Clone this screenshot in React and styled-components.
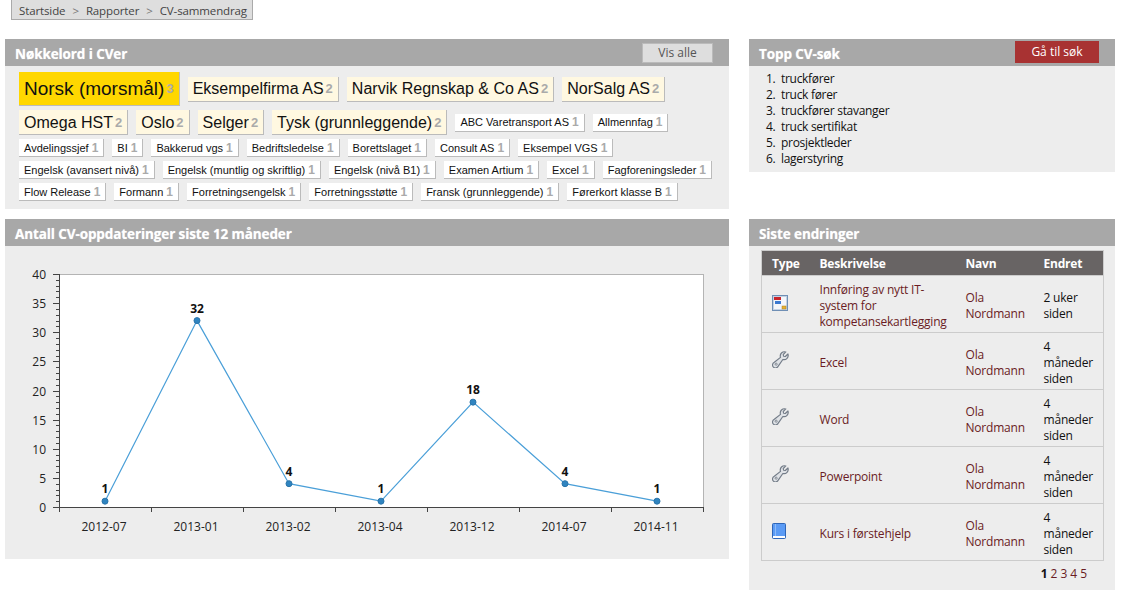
import styled, { createGlobalStyle } from "styled-components";

const GlobalStyle = createGlobalStyle`
  html, body {
    margin: 0;
    padding: 0;
    background: #fff;
    color: #111;
    font-family: "Open Sans", "Noto Sans", sans-serif;
    font-size: 12px;
  }
`;

const Page = styled.div`
  width: 1122px;
  height: 601px;
  overflow: hidden;
`;

const Breadcrumb = styled.div`
  display: flex;
  width: 242px;
  height: 20px;
  box-sizing: border-box;
  margin-left: 11px;
  padding: 2px 0 0 7px;
  gap: 7px;
  background: #dedede;
  border: 1px solid #aaa;
  border-top: 0;
  color: #444;
  font-size: 11.5px;
  line-height: 17px;
  letter-spacing: -0.12px;
  white-space: nowrap;
`;

const Crumb = styled.span`
  color: ${(p) => (p.$sep ? "#777" : "#444")};
`;

const Dashboard = styled.div`
  display: grid;
  grid-template-columns: 724px 366px;
  grid-template-rows: 170px auto;
  column-gap: 20px;
  row-gap: 10px;
  align-items: start;
  padding: 19px 0 0 5px;
`;

const Panel = styled.section`
  background: #ededed;
  height: ${(p) => p.$height}px;
`;

const PanelHeader = styled.header`
  display: flex;
  align-items: center;
  justify-content: space-between;
  height: 27px;
  box-sizing: border-box;
  padding: 0 16px 0 10px;
  background: #a8a8a8;
`;

const PanelTitle = styled.h2`
  margin: 2px 0 0;
  color: #fff;
  font-size: 13.5px;
  font-weight: 700;
  letter-spacing: -0.1px;
  text-shadow: 0 0 1px rgba(255, 255, 255, 0.6);
`;

const GreyButton = styled.button`
  width: 71px;
  height: 20px;
  padding: 0;
  background: #dedede;
  border: 1px solid #bbb;
  color: #555;
  font: 12px "Open Sans", sans-serif;
`;

const RedButton = styled.button`
  width: 84px;
  height: 22px;
  margin-top: -2px;
  padding: 0;
  background: #a83232;
  border: 0;
  color: #fff;
  font: 12px "Open Sans", sans-serif;
`;

const TagCloud = styled.div`
  display: flex;
  flex-wrap: wrap;
  align-items: center;
  gap: 4px 8px;
  padding: 6px 14px 0 14px;
`;

const sizes = {
  large: { font: 19, height: 34, bg: "#ffd700" },
  medium: { font: 16.05, height: 25, bg: "#fff8e1" },
  small: { font: 11, height: 18, bg: "#fff" },
};

const Tag = styled.a`
  display: flex;
  align-items: center;
  box-sizing: border-box;
  height: ${(p) => sizes[p.$size].height}px;
  padding: 0 5px;
  background: ${(p) => sizes[p.$size].bg};
  border-right: 1px solid #bbb;
  border-bottom: 1px solid #bbb;
  color: #111;
  font-family: "Liberation Sans", Arial, sans-serif;
  font-size: ${(p) => sizes[p.$size].font}px;
  white-space: nowrap;
`;

const TagCount = styled.span`
  margin-left: ${(p) => (p.$size === "small" ? 3 : 2)}px;
  color: #aaa;
  font-size: ${(p) => (p.$size === "small" ? 12 : 13)}px;
  font-weight: 700;
`;

const SearchList = styled.ol`
  margin: 0;
  padding: 5px 0 0 32px;
  line-height: 16px;
  letter-spacing: -0.3px;

  li::marker {
    content: counter(list-item) ".  ";
  }
`;

const ChartBox = styled.svg`
  display: block;
`;

const TableWrap = styled.div`
  padding: 4px 12px 0;
`;

const ChangeTable = styled.table`
  width: 342px;
  table-layout: fixed;
  border-collapse: collapse;
  border: 1px solid #ccc;
  line-height: 16px;
  letter-spacing: -0.2px;
`;

const HeadCell = styled.th`
  height: 23px;
  padding: 1px 0 0 10px;
  background: #686464;
  color: #fff;
  font-weight: 700;
  text-align: left;
`;

const Row = styled.tr`
  height: 57px;
  border-top: 1px solid #ccc;
`;

const Cell = styled.td`
  padding: 3px 4px 0 10px;
  vertical-align: middle;
  color: ${(p) => (p.$link ? "#6a1c24" : "#111")};
`;

const IconCell = styled(Cell)`
  padding: 0 4px 3px 10px;
  line-height: 0;
`;

const Pager = styled.div`
  display: flex;
  justify-content: flex-end;
  gap: 3px;
  padding: 5px 16px 0 0;
  line-height: 16px;
`;

const PageNo = styled.span`
  font-weight: ${(p) => (p.$active ? 700 : 400)};
  color: ${(p) => (p.$active ? "#111" : "#6a1c24")};
`;

const tags = [
  ["Norsk (morsmål)", 3, "large"],
  ["Eksempelfirma AS", 2, "medium"],
  ["Narvik Regnskap & Co AS", 2, "medium"],
  ["NorSalg AS", 2, "medium"],
  ["Omega HST", 2, "medium"],
  ["Oslo", 2, "medium"],
  ["Selger", 2, "medium"],
  ["Tysk (grunnleggende)", 2, "medium"],
  ["ABC Varetransport AS", 1, "small"],
  ["Allmennfag", 1, "small"],
  ["Avdelingssjef", 1, "small"],
  ["BI", 1, "small"],
  ["Bakkerud vgs", 1, "small"],
  ["Bedriftsledelse", 1, "small"],
  ["Borettslaget", 1, "small"],
  ["Consult AS", 1, "small"],
  ["Eksempel VGS", 1, "small"],
  ["Engelsk (avansert nivå)", 1, "small"],
  ["Engelsk (muntlig og skriftlig)", 1, "small"],
  ["Engelsk (nivå B1)", 1, "small"],
  ["Examen Artium", 1, "small"],
  ["Excel", 1, "small"],
  ["Fagforeningsleder", 1, "small"],
  ["Flow Release", 1, "small"],
  ["Formann", 1, "small"],
  ["Forretningsengelsk", 1, "small"],
  ["Forretningsstøtte", 1, "small"],
  ["Fransk (grunnleggende)", 1, "small"],
  ["Førerkort klasse B", 1, "small"],
];

const searches = [
  "truckfører",
  "truck fører",
  "truckfører stavanger",
  "truck sertifikat",
  "prosjektleder",
  "lagerstyring",
];

const points = [
  ["2012-07", 1],
  ["2013-01", 32],
  ["2013-02", 4],
  ["2013-04", 1],
  ["2013-12", 18],
  ["2014-07", 4],
  ["2014-11", 1],
];

const changes = [
  ["form", "Innføring av nytt IT-system for kompetansekartlegging", "2 uker siden"],
  ["wrench", "Excel", "4 måneder siden"],
  ["wrench", "Word", "4 måneder siden"],
  ["wrench", "Powerpoint", "4 måneder siden"],
  ["book", "Kurs i førstehjelp", "4 måneder siden"],
];

const FormIcon = () => (
  <svg width="16" height="16" viewBox="0 0 16 16">
    <rect x="0.5" y="0.5" width="15" height="15" fill="#f4f6fa" stroke="#6f8fb5" />
    <rect x="1.5" y="1.5" width="13" height="13" fill="none" stroke="#c4d2e4" />
    <rect x="2" y="2" width="7" height="3" fill="#c8242a" />
    <rect x="3" y="6" width="6" height="3" fill="#3a78d0" />
    <rect x="10" y="11" width="4" height="3" fill="#e8b030" stroke="#a88020" strokeWidth="0.5" />
  </svg>
);

const BookIcon = () => (
  <svg width="14" height="16" viewBox="0 0 14 16">
    <rect x="0.5" y="0.5" width="13" height="15" rx="1" fill="#5b9bf5" stroke="#2f66b8" />
    <rect x="3" y="1" width="1" height="12" fill="#8fbcf8" />
    <rect x="1" y="13" width="12" height="2" fill="#fff" />
  </svg>
);

// open jaw top right, ring at the handle end
const WrenchIcon = () => (
  <svg width="17" height="17" viewBox="0 0 16 16">
    <path
      d="M15 2.8 L12.5 5.2 L10.9 4.9 L10.6 3.3 L13 0.9 A4 4 0 0 0 8 6 L2.2 10.6 A2.8 2.8 0 1 0 5.9 14.2 L10.2 8 A4 4 0 0 0 15 2.8 Z"
      fill="#dfe2e6"
      stroke="#737c88"
      strokeWidth="1.1"
      strokeLinejoin="round"
    />
    <circle cx="3.9" cy="12.4" r="1" fill="#ededed" stroke="#737c88" strokeWidth="0.8" />
  </svg>
);

const TypeIcon = ({ type }) => {
  if (type === "form") return <FormIcon />;
  if (type === "book") return <BookIcon />;
  return <WrenchIcon />;
};

// chart geometry, plot area inside the svg
const LEFT = 54;
const RIGHT = 698;
const TOP = 28;
const BOTTOM = 261;
const xAt = (i) => LEFT + 46 + i * 92;
const yAt = (v) => BOTTOM - (v / 40) * (BOTTOM - TOP);

const UpdatesChart = () => {
  const line = points.map(([, v], i) => `${xAt(i)},${yAt(v)}`).join(" ");
  const minor = Array.from({ length: 41 }, (_, i) => i);

  return (
    <ChartBox width="724" height="313" viewBox="0 0 724 313" fontFamily="Open Sans, sans-serif" fontSize="12">
      <rect x={LEFT + 0.5} y={TOP + 0.5} width={RIGHT - LEFT} height={BOTTOM - TOP} fill="#fff" stroke="#b4b4b4" />
      {minor.map((v) => (
        <line
          key={v}
          x1={v % 5 === 0 ? LEFT - 6 : LEFT - 3}
          x2={LEFT}
          y1={Math.round(yAt(v)) + 0.5}
          y2={Math.round(yAt(v)) + 0.5}
          stroke="#444"
        />
      ))}
      {minor
        .filter((v) => v % 5 === 0)
        .map((v) => (
          <text key={v} x={LEFT - 13} y={yAt(v) + 5} textAnchor="end" fill="#222">
            {v}
          </text>
        ))}
      <line x1={LEFT + 0.5} x2={LEFT + 0.5} y1={TOP} y2={BOTTOM + 5} stroke="#444" />
      <line x1={LEFT} x2={RIGHT} y1={BOTTOM + 0.5} y2={BOTTOM + 0.5} stroke="#444" />
      {Array.from({ length: 8 }, (_, i) => (
        <line
          key={i}
          x1={LEFT + i * 92 + 0.5}
          x2={LEFT + i * 92 + 0.5}
          y1={BOTTOM}
          y2={BOTTOM + 5}
          stroke="#444"
        />
      ))}
      {points.map(([label], i) => (
        <text key={label} x={xAt(i) - 1} y={BOTTOM + 24} textAnchor="middle" fill="#222">
          {label}
        </text>
      ))}
      <polyline points={line} fill="none" stroke="#4a9fd8" strokeWidth="1.2" />
      {points.map(([label, v], i) => (
        <g key={label}>
          <circle cx={xAt(i)} cy={yAt(v)} r="3" fill="#2f84c0" stroke="#2a74aa" />
          <text x={xAt(i)} y={yAt(v) - 8} textAnchor="middle" fontWeight="700" fill="#111">
            {v}
          </text>
        </g>
      ))}
    </ChartBox>
  );
};

export default function App() {
  return (
    <Page>
      <GlobalStyle />
      <Breadcrumb>
        <Crumb>Startside</Crumb>
        <Crumb $sep>&gt;</Crumb>
        <Crumb>Rapporter</Crumb>
        <Crumb $sep>&gt;</Crumb>
        <Crumb>CV-sammendrag</Crumb>
      </Breadcrumb>

      <Dashboard>
        <Panel $height={170}>
          <PanelHeader>
            <PanelTitle>Nøkkelord i CVer</PanelTitle>
            <GreyButton>Vis alle</GreyButton>
          </PanelHeader>
          <TagCloud>
            {tags.map(([name, count, size]) => (
              <Tag key={name} $size={size}>
                {name}
                <TagCount $size={size}>{count}</TagCount>
              </Tag>
            ))}
          </TagCloud>
        </Panel>

        <Panel $height={133}>
          <PanelHeader>
            <PanelTitle>Topp CV-søk</PanelTitle>
            <RedButton>Gå til søk</RedButton>
          </PanelHeader>
          <SearchList>
            {searches.map((s) => (
              <li key={s}>{s}</li>
            ))}
          </SearchList>
        </Panel>

        <Panel $height={340}>
          <PanelHeader>
            <PanelTitle>Antall CV-oppdateringer siste 12 måneder</PanelTitle>
          </PanelHeader>
          <UpdatesChart />
        </Panel>

        <Panel $height={371}>
          <PanelHeader>
            <PanelTitle>Siste endringer</PanelTitle>
          </PanelHeader>
          <TableWrap>
            <ChangeTable>
              <colgroup>
                <col width="48" />
                <col width="146" />
                <col width="78" />
                <col width="70" />
              </colgroup>
              <thead>
                <tr>
                  <HeadCell>Type</HeadCell>
                  <HeadCell>Beskrivelse</HeadCell>
                  <HeadCell>Navn</HeadCell>
                  <HeadCell>Endret</HeadCell>
                </tr>
              </thead>
              <tbody>
                {changes.map(([type, text, when]) => (
                  <Row key={text}>
                    <IconCell>
                      <TypeIcon type={type} />
                    </IconCell>
                    <Cell $link>{text}</Cell>
                    <Cell $link>Ola Nordmann</Cell>
                    <Cell>{when}</Cell>
                  </Row>
                ))}
              </tbody>
            </ChangeTable>
            <Pager>
              {[1, 2, 3, 4, 5].map((n) => (
                <PageNo key={n} $active={n === 1}>
                  {n}
                </PageNo>
              ))}
            </Pager>
          </TableWrap>
        </Panel>
      </Dashboard>
    </Page>
  );
}
